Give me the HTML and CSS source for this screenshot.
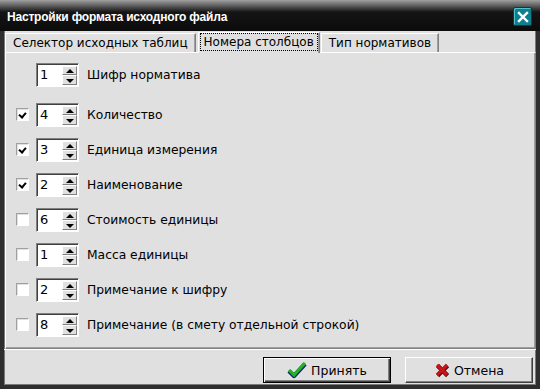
FILE: index.html
```
<!DOCTYPE html>
<html lang="ru">
<head>
  <meta charset="UTF-8">
  <title>Настройки формата исходного файла</title>
  <link rel="stylesheet" href="styles.css">
</head>
<body>
  <div class="window">
    <div class="titlebar">
      <span class="title">Настройки формата исходного файла</span>
      <span class="close">
        <svg width="12" height="12" viewBox="0 0 12 12"><path d="M2 2 L10 10 M10 2 L2 10" stroke="#fff" stroke-width="2.4" stroke-linecap="square"/></svg>
      </span>
    </div>

    <div class="tabs">
      <div class="tab">Селектор исходных таблиц</div>
      <div class="tab active"><span class="focus">Номера столбцов</span></div>
      <div class="tab">Тип нормативов</div>
    </div>

    <div class="panel">
      <div class="row first">
        <span class="check none"></span>
        <div class="spin"><span class="val">1</span><span class="arrows"><b class="up"></b><b class="down"></b></span></div>
        <span class="label">Шифр норматива</span>
      </div>
      <div class="row">
        <span class="check on"></span>
        <div class="spin"><span class="val">4</span><span class="arrows"><b class="up"></b><b class="down"></b></span></div>
        <span class="label">Количество</span>
      </div>
      <div class="row">
        <span class="check on"></span>
        <div class="spin"><span class="val">3</span><span class="arrows"><b class="up"></b><b class="down"></b></span></div>
        <span class="label">Единица измерения</span>
      </div>
      <div class="row">
        <span class="check on"></span>
        <div class="spin"><span class="val">2</span><span class="arrows"><b class="up"></b><b class="down"></b></span></div>
        <span class="label">Наименование</span>
      </div>
      <div class="row">
        <span class="check"></span>
        <div class="spin"><span class="val">6</span><span class="arrows"><b class="up"></b><b class="down"></b></span></div>
        <span class="label">Стоимость единицы</span>
      </div>
      <div class="row">
        <span class="check"></span>
        <div class="spin"><span class="val">1</span><span class="arrows"><b class="up"></b><b class="down"></b></span></div>
        <span class="label">Масса единицы</span>
      </div>
      <div class="row">
        <span class="check"></span>
        <div class="spin"><span class="val">2</span><span class="arrows"><b class="up"></b><b class="down"></b></span></div>
        <span class="label">Примечание к шифру</span>
      </div>
      <div class="row">
        <span class="check"></span>
        <div class="spin"><span class="val">8</span><span class="arrows"><b class="up"></b><b class="down"></b></span></div>
        <span class="label">Примечание (в смету отдельной строкой)</span>
      </div>
    </div>

    <div class="footer">
      <button class="btn default">
        <svg width="20" height="18" viewBox="0 0 20 18"><path d="M2 10 L7 15 L18 3" fill="none" stroke="#0a2a6a" stroke-width="4.4" stroke-linejoin="round"/><path d="M2 9 L7 14 L18 2" fill="none" stroke="#22b422" stroke-width="3"/></svg>
        Принять
      </button>
      <button class="btn">
        <svg width="16" height="16" viewBox="0 0 16 16"><path d="M3 3 L13 13 M13 3 L3 13" stroke="#5a0a0a" stroke-width="4.4" transform="translate(0.6 0.6)"/><path d="M3 3 L13 13 M13 3 L3 13" stroke="#c8141a" stroke-width="3.2"/></svg>
        Отмена
      </button>
    </div>
  </div>
</body>
</html>
```

FILE: styles.css
```
body { margin: 0; background: #e0e0e0; font-family: "DejaVu Sans", sans-serif; font-size: 12px; color: #000; }

.window { width: 540px; height: 389px; box-sizing: border-box; background: #e0e0e0; border: 4px solid #2e2e2e; border-top: none; box-shadow: inset 1px 0 #7a7a7a, inset -1px 0 #7a7a7a, inset 0 -1px #7a7a7a; display: flex; flex-direction: column; }

.titlebar { height: 31px; margin: 0 -4px; display: flex; align-items: center; justify-content: space-between; padding: 2px 8px 0 7px; box-sizing: border-box; background: linear-gradient(#a0a0a0 0, #5a5a5a 6px, #151515 12px, #0b0b0b 100%); }
.title { color: #fff; font-family: "Liberation Sans", sans-serif; font-weight: bold; font-size: 12px; letter-spacing: -0.2px; }
.close { width: 19px; height: 19px; box-sizing: border-box; border: 1px solid #0a3a44; border-radius: 2px; background: #0f7f8f; box-shadow: inset 1px 1px #4fc0cc; display: flex; align-items: center; justify-content: center; }

.tabs { display: flex; padding: 1px 0 0 1px; height: 20px; align-items: flex-end; }
.tab { height: 19px; box-sizing: border-box; padding: 0 7px; line-height: 18px; font-size: 12px; border-top: 1px solid #fff; border-left: 1px solid #fff; border-right: 1px solid #808080; box-shadow: inset -1px 0 #a0a0a0; margin-right: 2px; }
.tab.active { padding: 0 2px; position: relative; z-index: 1; margin-bottom: -1px; height: 21px; background: #e0e0e0; margin-right: 1px; }
.tab.active .focus { display: inline-block; outline: 1px dotted #000; padding: 0 3px; line-height: 16px; margin-top: 1px; }

.panel { height: 297px; box-sizing: border-box; border-top: 1px solid #fff; border-left: 1px solid #fff; border-right: 1px solid #808080; border-bottom: 1px solid #808080; box-shadow: inset -1px -1px #a0a0a0; margin: 0 0 0 1px; padding-top: 4px; }

.row { display: flex; align-items: center; height: 35px; padding-left: 10px; }
.row.first { margin-bottom: 5px; }
.check { width: 13px; height: 13px; box-sizing: border-box; border-top: 1px solid #a0a0a0; border-left: 1px solid #a0a0a0; border-right: 1px solid #fff; border-bottom: 1px solid #fff; background: #fff; box-shadow: inset 1px 1px #e0e0e0; margin-right: 7px; position: relative; }
.check.none { visibility: hidden; }
.check.on::after { content: ""; position: absolute; left: 3px; top: 2px; width: 3px; height: 5px; border-right: 2px solid #000; border-bottom: 2px solid #000; transform: rotate(40deg); }

.spin { width: 43px; height: 24px; box-sizing: border-box; border-top: 1px solid #808080; border-left: 1px solid #808080; border-right: 1px solid #fff; border-bottom: 1px solid #fff; box-shadow: inset 1px 1px #404040; background: #fff; display: flex; justify-content: space-between; padding: 2px 1px 1px 3px; }
.val { font-size: 13px; line-height: 18px; }
.arrows { width: 15px; display: flex; flex-direction: column; }
.arrows b { flex: 1; background: #e0e0e0; border-top: 1px solid #fff; border-left: 1px solid #fff; border-right: 1px solid #808080; border-bottom: 1px solid #808080; position: relative; }
.arrows b::after { content: ""; position: absolute; left: 3px; border-left: 4px solid transparent; border-right: 4px solid transparent; }
.arrows .up::after { top: 2px; border-bottom: 4px solid #000; }
.arrows .down::after { top: 3px; border-top: 4px solid #000; }

.label { margin-left: 8px; font-size: 12.3px; }

.footer { flex: 1; display: flex; justify-content: flex-end; align-items: flex-start; gap: 14px; padding: 7px 3px 0 0; border-top: 1px solid #fff; }
.btn { width: 128px; height: 26px; font-family: "DejaVu Sans", sans-serif; font-size: 12.5px; background: #e0e0e0; border: 1px solid; border-color: #fff #404040 #404040 #fff; box-shadow: inset -1px -1px #808080; display: flex; align-items: center; justify-content: center; gap: 4px; padding: 0; }
.btn.default { border: 1px solid #000; box-shadow: inset 1px 1px #fff, inset -1px -1px #404040, inset -2px -2px #808080; }
```
